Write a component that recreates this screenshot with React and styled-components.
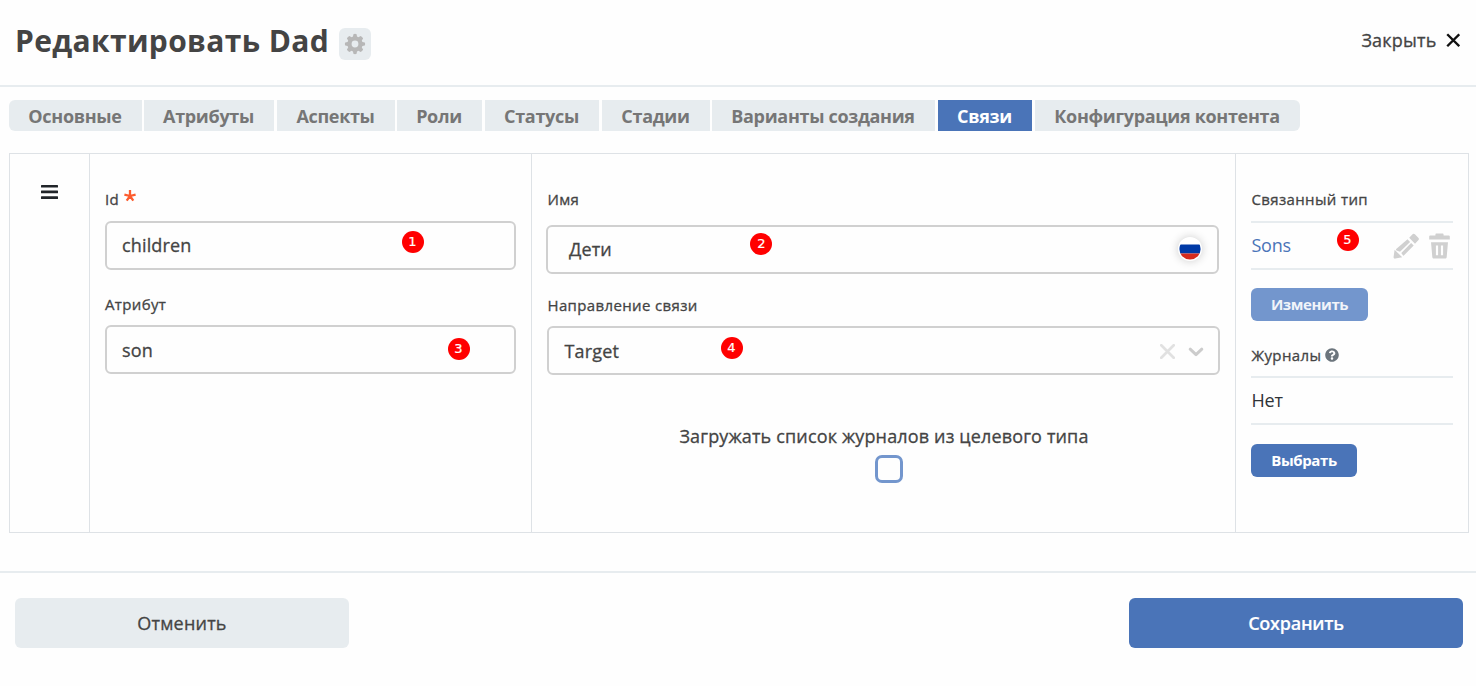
import React from "react";
import styled, { createGlobalStyle, css } from "styled-components";

const GlobalStyle = createGlobalStyle`
  * { box-sizing: border-box; }
  body {
    margin: 0;
    background: #fefefe;
    color: #444;
    font-family: "Open Sans", "Noto Sans", sans-serif;
  }
  button { font-family: inherit; border: 0; padding: 0; margin: 0; }
  svg { display: block; flex: none; }
`;

const mediumText = css`
  font-weight: 400;
  -webkit-text-stroke: 0.3px currentColor;
`;

const Dialog = styled.main`
  width: 1476px;
  height: 686px;
  display: flex;
  flex-direction: column;
  overflow: hidden;
`;

const Header = styled.header`
  height: 87px;
  flex: none;
  display: flex;
  align-items: flex-start;
  border-bottom: 2px solid #e7ecef;
  padding: 0 15px 0 15px;
`;

const Title = styled.h1`
  margin: 20px 0 0;
  width: 324px;
  font-size: 30px;
  line-height: 42px;
  font-weight: 700;
  letter-spacing: 0.35px;
  white-space: nowrap;
`;

const GearButton = styled.button`
  width: 32px;
  height: 32px;
  margin-top: 28px;
  border-radius: 6px;
  background: #e7ecef;
  color: #b7b7b7;
  display: flex;
  align-items: center;
  justify-content: center;
`;

const CloseButton = styled.button`
  ${mediumText}
  margin: 28px 1px 0 auto;
  height: 25px;
  background: none;
  color: #444;
  display: flex;
  align-items: center;
  gap: 9px;
  font-size: 18px;
  line-height: 25px;
  letter-spacing: 0.2px;
`;

const Tabs = styled.nav`
  display: flex;
  flex: none;
  padding: 13px 9px 0;
`;

const Tab = styled.button`
  width: ${(p) => p.$width}px;
  margin-right: ${(p) => p.$gap}px;
  height: 31px;
  padding: 1px 1px 0 0;
  font-size: 18px;
  line-height: 31px;
  font-weight: 700;
  letter-spacing: -0.32px;
  white-space: nowrap;
  color: ${(p) => (p.$active ? "#fff" : "#767676")};
  background: ${(p) => (p.$active ? "#4a74b8" : "#e7ecef")};
  &:first-child { border-radius: 6px 0 0 6px; }
  &:last-child { border-radius: 0 6px 6px 0; }
`;

const Association = styled.section`
  display: grid;
  grid-template-columns: 80px 442px 704px 232px;
  height: 380px;
  flex: none;
  margin: 22px 7px 0 9px;
  border: 1px solid #dee2e6;
`;

const Cell = styled.div`
  padding: ${(p) => p.$pad || "0 15px"};
  border-right: 1px solid #dee2e6;
  &:last-child { border-right: 0; }
`;

const DragCell = styled(Cell)`
  display: flex;
  justify-content: center;
  align-items: flex-start;
  color: #212529;
`;

const Label = styled.label`
  ${mediumText}
  display: flex;
  align-items: center;
  height: 20px;
  margin-top: ${(p) => p.$top || 0}px;
  padding-left: ${(p) => p.$indent || 0}px;
  font-size: 15px;
  line-height: 20px;
  letter-spacing: 0.36px;
  white-space: nowrap;
`;

const Required = styled.span`
  align-self: flex-start;
  margin: 1px 0 0 5px;
  color: #fc5c2e;
`;

const Help = styled.span`
  margin-left: 4px;
`;

const Input = styled.div`
  ${mediumText}
  position: relative;
  display: flex;
  align-items: center;
  width: ${(p) => p.$width}px;
  height: 49px;
  margin-top: ${(p) => p.$top}px;
  margin-left: ${(p) => p.$left || 0}px;
  padding-top: ${(p) => p.$drop || 0}px;
  padding-left: ${(p) => p.$indent || 15}px;
  border: 2px solid #d0d0d0;
  border-radius: 6px;
  font-size: 18px;
  line-height: 25px;
  letter-spacing: 0.15px;
`;

const Marker = styled.span`
  position: absolute;
  left: ${(p) => p.$x}px;
  top: ${(p) => p.$y}px;
  width: 22px;
  height: 22px;
  border-radius: 50%;
  background: #f00;
  color: #fff;
  font: 13px/21px "DejaVu Sans", sans-serif;
  -webkit-text-stroke: 0.2px currentColor;
  letter-spacing: 0;
  text-align: center;
`;

const FlagButton = styled.span`
  width: 24px;
  height: 24px;
  margin: 0 15px 2px auto;
  border-radius: 50%;
  background: #fff;
  box-shadow: 0 0 10px rgba(0, 0, 0, 0.2);
  display: flex;
  align-items: center;
  justify-content: center;
`;

const SelectControls = styled.span`
  display: flex;
  align-items: center;
  gap: 13px;
  margin: 0 14.5px 0 auto;
`;

const JournalOption = styled.div`
  ${mediumText}
  display: flex;
  flex-direction: column;
  align-items: center;
  width: 100%;
  margin-top: 49px;
  padding-right: 5px;
  padding-left: 6px;
  font-size: 18px;
  line-height: 25px;
  letter-spacing: 0.15px;
`;

const Checkbox = styled.span`
  width: 28px;
  height: 28px;
  margin: 6px 0 0 10px;
  border: 3px solid #7396cd;
  border-radius: 7px;
`;

const ValueRow = styled.div`
  position: relative;
  display: flex;
  align-items: center;
  width: 202px;
  height: 49px;
  margin-top: ${(p) => p.$top}px;
  padding-left: 0.5px;
  border: solid #e7ecef;
  border-width: 2px 0;
  font-size: 18px;
  line-height: 25px;
  letter-spacing: -0.25px;
  color: ${(p) => (p.$link ? "#4a74b8" : "#2f3337")};
`;

const RowActions = styled.span`
  display: flex;
  gap: 10px;
  margin: 0 3px 0 auto;
  color: #d0d0d0;
`;

const SmallButton = styled.button`
  display: block;
  width: ${(p) => p.$width}px;
  height: 33px;
  margin-top: ${(p) => p.$top}px;
  border-radius: 6px;
  background: ${(p) => (p.$muted ? "#7396cd" : "#4a74b8")};
  color: ${(p) => (p.$muted ? "#f1f4fa" : "#fff")};
  font-size: 15px;
  line-height: 33px;
  font-weight: 700;
  letter-spacing: -0.4px;
`;

const Footer = styled.footer`
  display: flex;
  justify-content: space-between;
  margin-top: 38px;
  padding: 25px 13px 0 15px;
  border-top: 2px solid #e7ecef;
`;

const FooterButton = styled.button`
  width: 334px;
  height: 50px;
  border-radius: 6px;
  font-size: 18px;
  line-height: 50px;
  background: #e7ecef;
  color: #444;
  letter-spacing: 0.2px;
  ${mediumText}
  ${(p) =>
    p.$primary &&
    css`
      background: #4a74b8;
      color: #fff;
      font-weight: 600;
      letter-spacing: -0.25px;
      -webkit-text-stroke: 0.15px currentColor;
    `}
`;

const tabs = [
  ["Основные", 133, 2],
  ["Атрибуты", 130, 3],
  ["Аспекты", 118, 2],
  ["Роли", 85, 3],
  ["Статусы", 114, 3],
  ["Стадии", 108, 2],
  ["Варианты создания", 223, 3],
  ["Связи", 94, 3],
  ["Конфигурация контента", 265, 0],
];

const GearIcon = () => (
  <svg width="22" height="22" viewBox="0 0 22 22" fill="currentColor">
    <path
      fillRule="evenodd"
      d="M9.4 1.2Q11 .4 12.6 1.2L13 3.6l1.5.6 2-1.3q1.9.7 2.6 2.6l-1.3 2 .6 1.5 2.4.4q.8 1.6 0 3.2l-2.4.4-.6 1.5 1.3 2q-.7 1.9-2.6 2.6l-2-1.3-1.5.6-.4 2.4q-1.6.8-3.2 0L9 18.4l-1.5-.6-2 1.3q-1.9-.7-2.6-2.6l1.3-2-.6-1.5-2.4-.4q-.8-1.6 0-3.2L3.6 9l.6-1.5-1.3-2q.7-1.9 2.6-2.6l2 1.3L9 3.6zM11 7.6a3.4 3.4 0 1 0 0 6.8 3.4 3.4 0 0 0 0-6.8z"
    />
  </svg>
);

const CrossIcon = ({ size, color, stroke, round }) => (
  <svg
    width={size}
    height={size}
    viewBox="0 0 14 14"
    fill="none"
    stroke={color}
    strokeWidth={stroke}
    strokeLinecap={round ? "round" : "butt"}
  >
    <path d="M1.2 1.2l11.6 11.6M12.8 1.2L1.2 12.8" />
  </svg>
);

const AsteriskIcon = () => (
  <svg width="12" height="12" viewBox="0 0 12 12" fill="none" stroke="currentColor" strokeWidth="2.3">
    <path d="M6 6V0M6 6L.4 4.6M6 6l5.6-1.4M6 6l-3.3 4.6M6 6l3.3 4.6" />
  </svg>
);

const MenuIcon = () => (
  <svg width="18" height="16" viewBox="0 0 18 16" fill="currentColor">
    <rect y="1" width="17" height="2.6" rx=".5" />
    <rect y="6.6" width="17" height="2.6" rx=".5" />
    <rect y="12.3" width="17" height="2.6" rx=".5" />
  </svg>
);

const RussianFlag = () => (
  <svg width="22" height="22" viewBox="0 0 22 22">
    <clipPath id="flag-circle">
      <circle cx="11" cy="11" r="10.6" />
    </clipPath>
    <g clipPath="url(#flag-circle)">
      <rect width="22" height="22" fill="#fff" />
      <rect y="6.5" width="22" height="9" fill="#0039a6" />
      <rect y="15.5" width="22" height="7" fill="#d52b1e" />
    </g>
  </svg>
);

const ChevronIcon = () => (
  <svg width="16" height="10" viewBox="0 0 16 10" fill="none" stroke="#ccc" strokeWidth="3" strokeLinecap="round" strokeLinejoin="round">
    <path d="M2.2 2.2L8 7.6l5.8-5.4" />
  </svg>
);

const PencilIcon = () => (
  <svg width="26" height="26" viewBox="0 0 26 26" fill="currentColor">
    <path d="M1.6 16.8L9.2 24.2l-6.8 1.4c-1.3.2-2-.6-1.8-1.8z" />
    <path d="M16.2 4.8l3.1-3.4c.8-.9 1.8-.9 2.6-.1l3.4 3.5c.8.8.8 1.7 0 2.5L22 10.7z" />
    <path d="M14.5 6.3l2.6 2.6L7 18.8l-3.5-1.4c-.6-.3-.7-.9-.3-1.4z" />
    <path d="M18.1 10l2.6 2.5L11.1 22.2c-.5.6-1.1.6-1.4-.1L8.3 19.9z" />
  </svg>
);

const TrashIcon = () => (
  <svg width="21" height="26" viewBox="0 0 21 26" fill="currentColor">
    <path d="M6.4 2.5V1.7C6.4 1 6.8.6 7.5.6h6c.7 0 1.1.4 1.1 1.1v.8h5.2c.6 0 1 .3 1 .9v3.1H.2V3.4c0-.6.4-.9 1-.9z" />
    <path fillRule="evenodd" d="M2 9.3h17l-1.3 14.6c-.1 1.1-.7 1.7-1.8 1.7H5.1c-1.1 0-1.7-.6-1.8-1.7zM6.9 12.4v9.8h2.2v-9.8zm5 0v9.8h2.2v-9.8z" />
  </svg>
);

const HelpIcon = () => (
  <svg width="14" height="14" viewBox="0 0 512 512" fill="#6c757d">
    <path d="M504 256c0 136.997-111.043 248-248 248S8 392.997 8 256C8 119.083 119.043 8 256 8s248 111.083 248 248zM262.655 90c-54.497 0-89.255 22.957-116.549 63.758-3.536 5.286-2.353 12.415 2.715 16.258l34.699 26.31c5.205 3.947 12.621 3.008 16.665-2.122 17.864-22.658 30.113-35.797 57.303-35.797 20.429 0 45.698 13.148 45.698 32.958 0 14.976-12.363 22.667-32.534 33.976C247.128 238.528 216 254.941 216 296v4c0 6.627 5.373 12 12 12h56c6.627 0 12-5.373 12-12v-1.333c0-28.462 83.186-29.647 83.186-106.667 0-58.002-60.165-102-116.531-102zM256 338c-25.365 0-46 20.635-46 46 0 25.364 20.635 46 46 46s46-20.636 46-46c0-25.365-20.635-46-46-46z" />
  </svg>
);

export default function App() {
  return (
    <>
      <GlobalStyle />
      <Dialog>
        <Header>
          <Title>Редактировать Dad</Title>
          <GearButton><GearIcon /></GearButton>
          <CloseButton>
            Закрыть
            <CrossIcon size={14.5} color="#111" stroke={2.3} />
          </CloseButton>
        </Header>

        <Tabs>
          {tabs.map(([name, width, gap]) => (
            <Tab key={name} $width={width} $gap={gap} $active={name === "Связи"}>{name}</Tab>
          ))}
        </Tabs>

        <Association>
          <DragCell $pad="30px 0 0"><MenuIcon /></DragCell>

          <Cell>
            <Label $top={35}>
              Id <Required><AsteriskIcon /></Required>
            </Label>
            <Input $width={411} $top={12}>
              children
              <Marker $x={294.5} $y={7.5}>1</Marker>
            </Input>
            <Label $top={24}>Атрибут</Label>
            <Input $width={411} $top={11} $drop={2}>
              son
              <Marker $x={340.5} $y={10.5}>3</Marker>
            </Input>
          </Cell>

          <Cell>
            <Label $top={35} $indent={0.5}>Имя</Label>
            <Input $width={673} $top={16} $left={-1} $indent={21}>
              Дети
              <Marker $x={202.4} $y={5.5}>2</Marker>
              <FlagButton><RussianFlag /></FlagButton>
            </Input>
            <Label $top={21} $indent={0.5}>Направление связи</Label>
            <Input $width={673} $top={11} $drop={2} $indent={15.5}>
              Target
              <Marker $x={171.5} $y={8.5}>4</Marker>
              <SelectControls>
                <CrossIcon size={15} color="#e1e1e1" stroke={2.5} round />
                <ChevronIcon />
              </SelectControls>
            </Input>
            <JournalOption>
              Загружать список журналов из целевого типа
              <Checkbox />
            </JournalOption>
          </Cell>

          <Cell>
            <Label $top={35} $indent={0.5}>Связанный тип</Label>
            <ValueRow $top={12} $link>
              Sons
              <Marker $x={85.5} $y={5.5}>5</Marker>
              <RowActions><PencilIcon /><TrashIcon /></RowActions>
            </ValueRow>
            <SmallButton $width={117} $top={18} $muted>Изменить</SmallButton>
            <Label $top={24} $indent={0.5}>Журналы<Help><HelpIcon /></Help></Label>
            <ValueRow $top={11}>Нет</ValueRow>
            <SmallButton $width={106} $top={19}>Выбрать</SmallButton>
          </Cell>
        </Association>

        <Footer>
          <FooterButton>Отменить</FooterButton>
          <FooterButton $primary>Сохранить</FooterButton>
        </Footer>
      </Dialog>
    </>
  );
}
